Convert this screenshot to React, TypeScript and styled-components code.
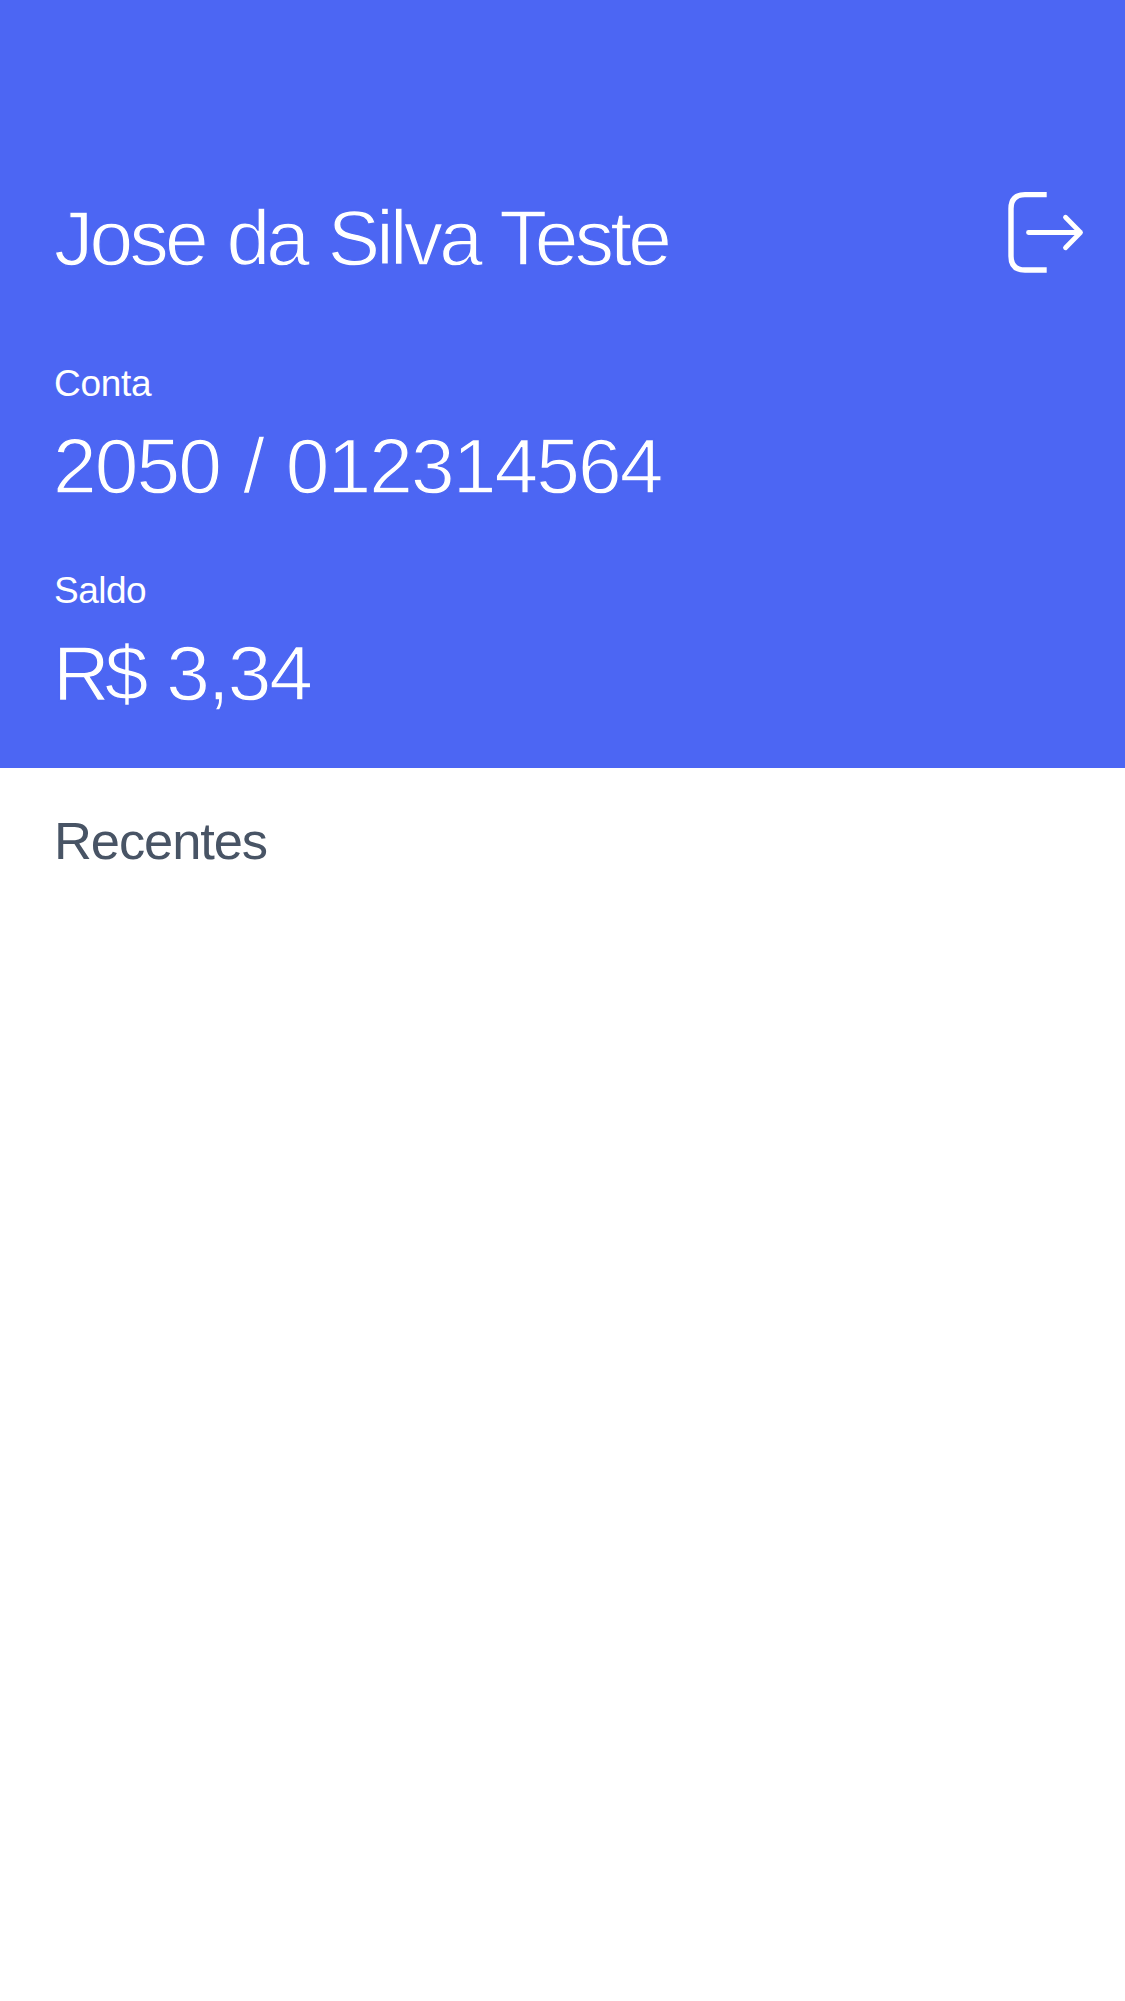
import React from "react";
import styled, { createGlobalStyle } from "styled-components";

const BLUE = "#4C66F3";

const GlobalStyle = createGlobalStyle`
  body {
    margin: 0;
    background: #fff;
    font-family: "Liberation Sans", Arial, sans-serif;
  }
`;

const Screen = styled.main`
  min-height: 2001px;
  background: #fff;
`;

const Header = styled.header`
  box-sizing: border-box;
  height: 768px;
  padding: 191px 41px 0 54px;
  background: ${BLUE};
  color: #fff;
`;

const TitleRow = styled.div`
  display: flex;
  justify-content: space-between;
  align-items: flex-start;
  margin-bottom: 77px;
`;

/* The blue outline trims the regular weight down to a light one. */
const LightText = styled.div<{ $tracking: number; $gap?: number; $indent?: number }>`
  margin: 0 0 0 ${(p) => p.$indent ?? 0}px;
  font-size: 78.5px;
  font-weight: 400;
  line-height: 94px;
  letter-spacing: ${(p) => p.$tracking}px;
  word-spacing: ${(p) => p.$gap ?? 0}px;
  white-space: nowrap;
  -webkit-text-stroke: 1.3px ${BLUE};
`;

const Currency = styled.span`
  letter-spacing: -5px;
`;

const Field = styled.section`
  display: flex;
  flex-direction: column;
  gap: 13px;

  & + & {
    margin-top: 56px;
  }
`;

const Label = styled.div<{ $tracking: number }>`
  font-size: 37px;
  line-height: 44px;
  letter-spacing: ${(p) => p.$tracking}px;
`;

const LogoutButton = styled.button`
  display: block;
  width: 78px;
  height: 82px;
  padding: 0;
  border: 0;
  background: none;
`;

const Recent = styled.section`
  padding: 41px 54px;
`;

const RecentTitle = styled.h2`
  margin: 0;
  font-size: 52.5px;
  font-weight: 400;
  line-height: 64px;
  letter-spacing: -1.1px;
  color: #485465;
`;

const LogoutIcon = () => (
  <svg width="78" height="82" viewBox="0 0 78 82" fill="none" stroke="#fff" display="block">
    <path d="M40.7 3.6H19Q5 3.6 5 17.4V65.2Q5 79 19 79H40.7" strokeWidth="5.4" />
    <path
      d="M22.5 41.5H74.5M59.5 26.2L74.5 41.5L59.5 56.8"
      strokeWidth="4.8"
      strokeLinejoin="round"
      strokeLinecap="round"
    />
  </svg>
);

export default function App() {
  return (
    <>
      <GlobalStyle />
      <Screen>
        <Header>
          <TitleRow>
            <LightText as="h1" $tracking={-3.75} $gap={3.5}>Jose da Silva Teste</LightText>
            <LogoutButton aria-label="Sair">
              <LogoutIcon />
            </LogoutButton>
          </TitleRow>
          <Field>
            <Label $tracking={-0.3}>Conta</Label>
            <LightText $tracking={-1.9} $gap={3} $indent={-1}>2050 / 012314564</LightText>
          </Field>
          <Field>
            <Label $tracking={-0.5}>Saldo</Label>
            <LightText $tracking={-2} $gap={3} $indent={-1}><Currency>R$</Currency> 3,34</LightText>
          </Field>
        </Header>
        <Recent>
          <RecentTitle>Recentes</RecentTitle>
        </Recent>
      </Screen>
    </>
  );
}
